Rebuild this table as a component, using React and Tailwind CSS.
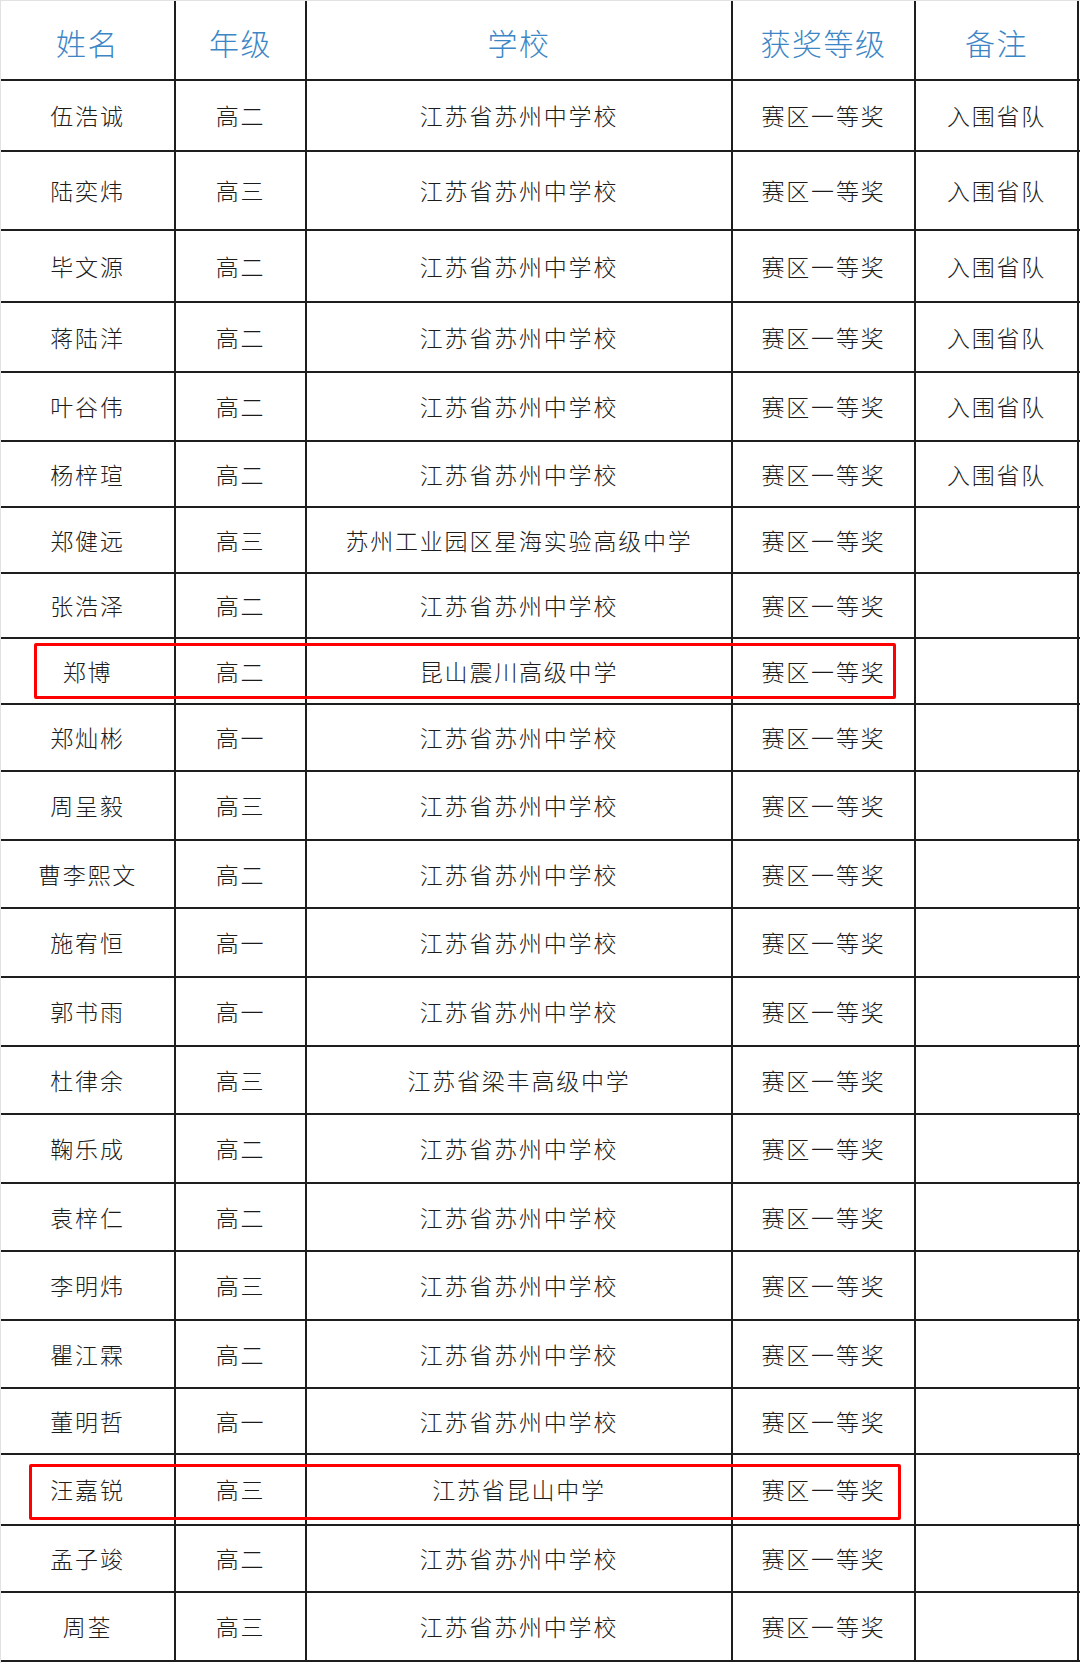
const rows = [
  { name: '伍浩诚', grade: '高二', school: '江苏省苏州中学校', note: '入围省队', h: 'h-[71px]' },
  { name: '陆奕炜', grade: '高三', school: '江苏省苏州中学校', note: '入围省队', h: 'h-[79px]' },
  { name: '毕文源', grade: '高二', school: '江苏省苏州中学校', note: '入围省队', h: 'h-[72px]' },
  { name: '蒋陆洋', grade: '高二', school: '江苏省苏州中学校', note: '入围省队', h: 'h-[70px]' },
  { name: '叶谷伟', grade: '高二', school: '江苏省苏州中学校', note: '入围省队', h: 'h-[69px]' },
  { name: '杨梓瑄', grade: '高二', school: '江苏省苏州中学校', note: '入围省队', h: 'h-[66px]' },
  { name: '郑健远', grade: '高三', school: '苏州工业园区星海实验高级中学', h: 'h-[66px]' },
  { name: '张浩泽', grade: '高二', school: '江苏省苏州中学校', h: 'h-[65px]' },
  { name: '郑博', grade: '高二', school: '昆山震川高级中学', h: 'h-[66px]', mark: 'top-[4px] left-[33px] w-[862px]' },
  { name: '郑灿彬', grade: '高一', school: '江苏省苏州中学校', h: 'h-[67px]' },
  { name: '周呈毅', grade: '高三', school: '江苏省苏州中学校', h: 'h-[69px]' },
  { name: '曹李熙文', grade: '高二', school: '江苏省苏州中学校', h: 'h-[68px]' },
  { name: '施宥恒', grade: '高一', school: '江苏省苏州中学校', h: 'h-[69px]' },
  { name: '郭书雨', grade: '高一', school: '江苏省苏州中学校', h: 'h-[69px]' },
  { name: '杜律余', grade: '高三', school: '江苏省梁丰高级中学', h: 'h-[68px]' },
  { name: '鞠乐成', grade: '高二', school: '江苏省苏州中学校', h: 'h-[69px]' },
  { name: '袁梓仁', grade: '高二', school: '江苏省苏州中学校', h: 'h-[68px]' },
  { name: '李明炜', grade: '高三', school: '江苏省苏州中学校', h: 'h-[69px]' },
  { name: '瞿江霖', grade: '高二', school: '江苏省苏州中学校', h: 'h-[68px]' },
  { name: '董明哲', grade: '高一', school: '江苏省苏州中学校', h: 'h-[66px]' },
  { name: '汪嘉锐', grade: '高三', school: '江苏省昆山中学', h: 'h-[71px]', mark: 'top-[9px] left-[28px] w-[872px]' },
  { name: '孟子竣', grade: '高二', school: '江苏省苏州中学校', h: 'h-[67px]' },
  { name: '周荃', grade: '高三', school: '江苏省苏州中学校', h: 'h-[69px]' },
];

const cols = 'grid grid-cols-[175px_131px_426px_183px_163px]';
const cell = 'flex items-center justify-center border-r-2 border-[#1e1e1e]';

function Row({ r }) {
  return (
    <div className={`relative ${cols} ${r.h} border-b-2 border-[#1e1e1e]`}>
      <div className={cell}>{r.name}</div>
      <div className={cell}>{r.grade}</div>
      <div className={cell}>{r.school}</div>
      <div className={cell}>赛区一等奖</div>
      <div className={cell}>{r.note || ''}</div>
      {r.mark && (
        <div className={`absolute ${r.mark} h-[56px] border-[3px] border-[#ff0000] rounded-[2px] pointer-events-none`} />
      )}
    </div>
  );
}

export default function App() {
  return (
    <div
      className="w-[1080px] h-[1663px] bg-white overflow-hidden border-l border-t border-[#e2e2e2]"
      style={{ fontFamily: '"Noto Sans CJK SC", "Noto Sans", sans-serif' }}
    >
      <div className="text-[23px] tracking-[1.8px] text-[#1c1c1c] font-light">
        {/* header */}
        <div className={`${cols} h-[80px] border-b-2 border-[#1e1e1e] text-[30px] text-[#3d86c6] tracking-[1.5px]`}>
          <div className={`${cell} pt-1`}>姓名</div>
          <div className={`${cell} pt-1`}>年级</div>
          <div className={`${cell} pt-1`}>学校</div>
          <div className={`${cell} pt-1`}>获奖等级</div>
          <div className={`${cell} pt-1`}>备注</div>
        </div>
        {rows.map((r) => (
          <Row key={r.name} r={r} />
        ))}
      </div>
    </div>
  );
}
